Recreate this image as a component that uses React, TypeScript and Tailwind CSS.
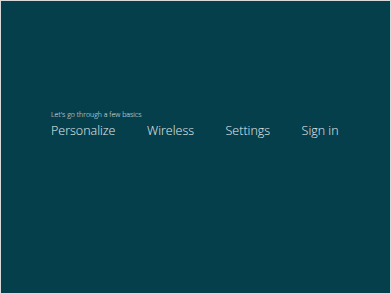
export default function App() {
  const steps = ["Personalize", "Wireless", "Settings", "Sign in"];
  return (
    <div className="w-[391px] h-[294px] bg-[#d9d9d9] p-px">
      <div className="w-full h-full bg-[#053f4c] pl-[50px] pt-[109px] text-[#e6eef0] font-['Open_Sans',sans-serif]">
        <p className="text-[7px] leading-[10px] font-light">Let's go through a few basics</p>
        <div className="flex gap-[31.5px] mt-[2px] text-[12.5px] leading-[17px] font-light">
          {steps.map((s) => (
            <span key={s}>{s}</span>
          ))}
        </div>
      </div>
    </div>
  );
}
